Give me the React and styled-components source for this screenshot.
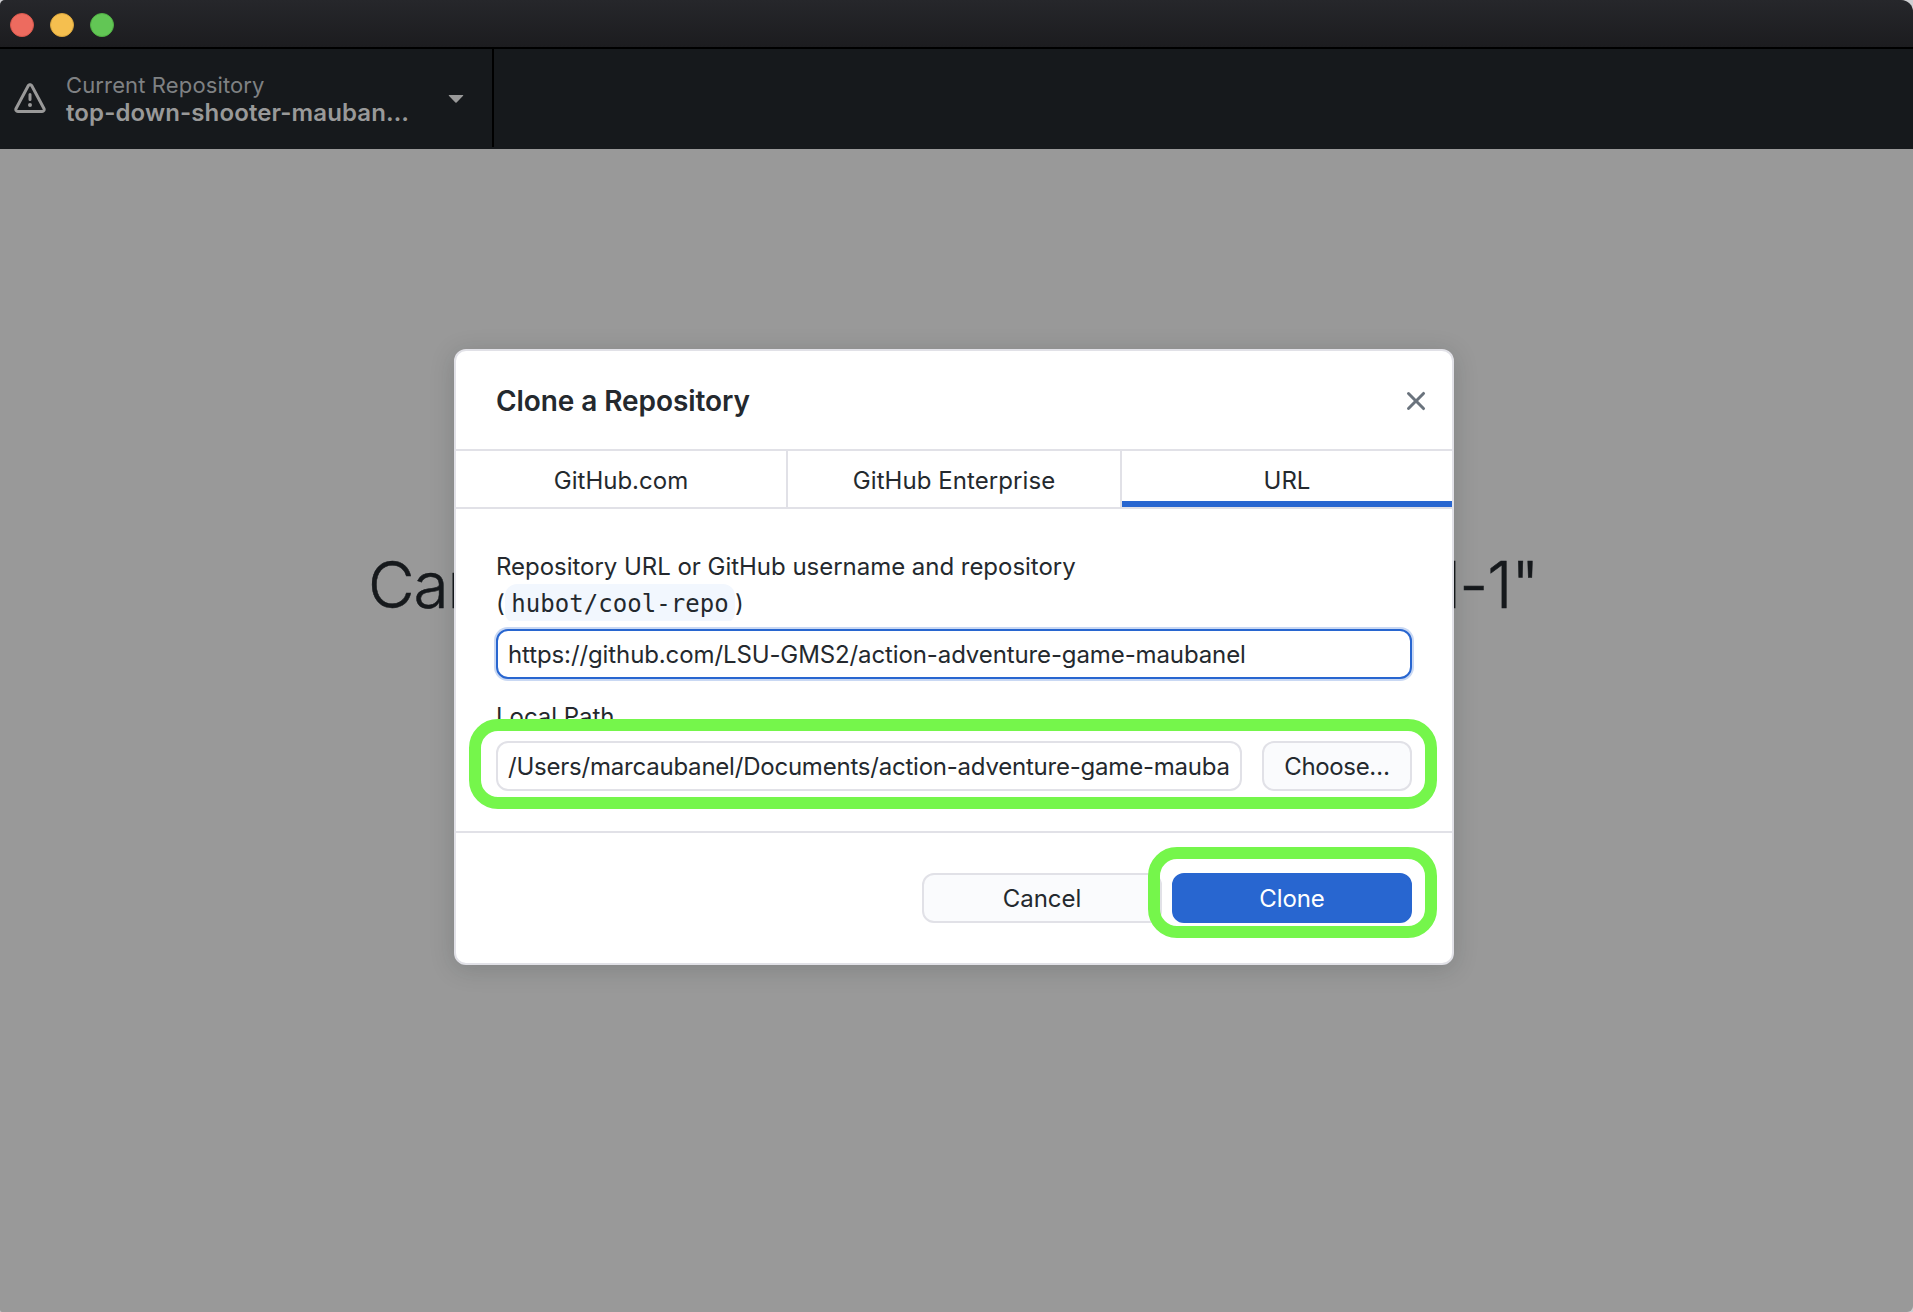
import React from "react";
import styled, { createGlobalStyle, css } from "styled-components";

const GlobalStyle = createGlobalStyle`
  * { box-sizing: border-box; }
  html, body { margin: 0; padding: 0; }
  body {
    background: #cfcfd2;
    color: #24292e;
    font-family: Inter, "Liberation Sans", sans-serif;
    font-size: 24px;
    overflow: hidden;
  }
`;

const Window = styled.div`
  display: flex;
  flex-direction: column;
  width: 1913px;
  height: 1312px;
  overflow: hidden;
  background: #999999;
  border-radius: 5px 12px 6px 2px;
`;

const TitleBar = styled.header`
  display: flex;
  align-items: center;
  gap: 16px;
  height: 49px;
  padding: 3px 10px 0;
  border-bottom: 2px solid #000;
  background: linear-gradient(#26272b, #1c1c1f);
`;

const TrafficLight = styled.span`
  width: 24px;
  height: 24px;
  border-radius: 50%;
  border: 1px solid ${(p) => p.$edge};
  background: ${(p) => p.$fill};
`;

const Toolbar = styled.nav`
  display: flex;
  height: 100px;
  padding-bottom: 2px;
  background: #16191c;
`;

const RepositoryButton = styled.div`
  display: flex;
  align-items: center;
  width: 494px;
  padding: 2px 20px 0 14px;
  border-right: 2px solid #000;
`;

const RepositoryText = styled.div`
  display: flex;
  flex-direction: column;
  flex: 1;
  margin-left: 20px;
  line-height: 27px;
  white-space: nowrap;
`;

const RepositoryCaption = styled.span`
  font-size: 22px;
  letter-spacing: 0.13px;
  color: #7f8183;
`;

const RepositoryName = styled.span`
  font-size: 24px;
  font-weight: 600;
  letter-spacing: 0.12px;
  color: #999999;
`;

const Icon = styled.svg`
  display: block;
  flex: none;
  width: 32px;
  height: 32px;
  margin-top: ${(p) => p.$shift || 0}px;
  fill: ${(p) => p.$color};
`;

const Workspace = styled.main`
  position: relative;
  flex: 1;
  padding-top: 395px;
`;

const MissingTitle = styled.h1`
  margin: 0;
  padding-left: 368px;
  font-size: 64px;
  font-weight: 300;
  line-height: 82px;
  letter-spacing: -1.1px;
  white-space: nowrap;
  color: #16191c;
  -webkit-text-stroke: 0.5px #16191c;
`;

const Condensed = styled.span`
  letter-spacing: -3.01px;
`;

const Dialog = styled.section`
  position: absolute;
  top: 200px;
  left: 454px;
  display: flex;
  flex-direction: column;
  width: 1000px;
  height: 616px;
  border: 2px solid #e1e1e7;
  border-radius: 12px;
  background: #fff;
  box-shadow: 0 4px 24px rgba(20, 36, 36, 0.18);
`;

const DialogHeader = styled.header`
  display: flex;
  align-items: center;
  justify-content: space-between;
  height: 100px;
  padding: 0 20px 0 40px;
  border-bottom: 2px solid #e1e1e7;
`;

const DialogTitle = styled.h2`
  margin: 1px 0 0;
  font-size: 28px;
  font-weight: 600;
  letter-spacing: -0.08px;
`;

const TabBar = styled.div`
  display: grid;
  grid-template-columns: 332px 334px 330px;
  height: 58px;
  border-bottom: 2px solid #e1e1e7;
`;

const Tab = styled.div`
  display: flex;
  align-items: center;
  justify-content: center;
  padding-top: 2px;
  letter-spacing: ${(p) => p.$tracking || 0}px;
  border-right: 2px solid #e1e1e7;
  ${(p) =>
    p.$selected &&
    css`
      border-right: 0;
      box-shadow: inset 0 -6px 0 #2866d0;
    `}
`;

const DialogBody = styled.div`
  height: 324px;
  padding: 39px 40px 0;
  border-bottom: 2px solid #e1e1e7;
`;

const FieldLabel = styled.div`
  overflow: hidden;
  height: ${(p) => p.$height}px;
  margin-bottom: ${(p) => p.$gap}px;
  line-height: ${(p) => p.$leading}px;
  letter-spacing: -0.03px;
`;

const Code = styled.code`
  padding: 6px 6px 6px 6.5px;
  border-radius: 12px;
  background: #f2f7fe;
  font-family: "DejaVu Sans Mono", monospace;
  font-size: 24px;
  letter-spacing: 0.06px;
`;

const TextField = styled.div`
  flex: 1;
  min-width: 0;
  height: 50px;
  padding: 1px 10px 0;
  border: 2px solid ${(p) => (p.$focused ? "#2866d0" : "#e1e1e7")};
  border-radius: 12px;
  background: #fff;
  box-shadow: ${(p) => (p.$focused ? "0 0 0 2px #c9d8f3" : "none")};
`;

const FieldValue = styled.div`
  overflow: hidden;
  line-height: 46px;
  height: 45px;
  letter-spacing: ${(p) => p.$tracking}px;
  white-space: nowrap;
`;

const FieldGap = styled.div`
  height: 20px;
`;

const PathRow = styled.div`
  position: relative;
  display: flex;
  gap: 20px;
`;

const Button = styled.div`
  display: flex;
  align-items: center;
  justify-content: center;
  width: ${(p) => p.$width}px;
  height: 50px;
  border: 2px solid ${(p) => (p.$primary ? "#2866d0" : "#e1e1e7")};
  border-radius: 12px;
  background: ${(p) => (p.$primary ? "#2866d0" : "#fafbfd")};
  color: ${(p) => (p.$primary ? "#fff" : "#24292e")};
  letter-spacing: ${(p) => p.$tracking || 0}px;
`;

const DialogFooter = styled.footer`
  display: flex;
  justify-content: flex-end;
  gap: 10px;
  padding: 40px 40px 0;
`;

const PrimarySlot = styled.div`
  position: relative;
`;

const Callout = styled.div`
  position: absolute;
  top: ${(p) => p.$top}px;
  right: -25px;
  bottom: ${(p) => p.$bottom}px;
  left: ${(p) => p.$left}px;
  border: 12px solid #75f64b;
  border-radius: 29px;
`;

const AlertIcon = () => (
  <Icon viewBox="0 0 16 16" $color="#999999">
    <path d="M8.22 1.754a.25.25 0 00-.44 0L1.698 13.132a.25.25 0 00.22.368h12.164a.25.25 0 00.22-.368L8.22 1.754zm-1.763-.707c.659-1.234 2.427-1.234 3.086 0l6.082 11.378A1.75 1.75 0 0114.082 15H1.918a1.75 1.75 0 01-1.543-2.575L6.457 1.047zM9 11a1 1 0 11-2 0 1 1 0 012 0zm-.25-5.25a.75.75 0 00-1.5 0v2.5a.75.75 0 001.5 0v-2.5z" />
  </Icon>
);

const CaretIcon = () => (
  <Icon viewBox="0 0 16 16" $color="#999999" $shift={-4}>
    <path d="M4.427 7.427l3.396 3.396a.25.25 0 00.354 0l3.396-3.396A.25.25 0 0011.396 7H4.604a.25.25 0 00-.177.427z" />
  </Icon>
);

const CloseIcon = () => (
  <Icon viewBox="0 0 16 16" $color="#6a737d" $shift={2}>
    <path d="M3.72 3.72a.75.75 0 011.06 0L8 6.94l3.22-3.22a.75.75 0 111.06 1.06L9.06 8l3.22 3.22a.75.75 0 11-1.06 1.06L8 9.06l-3.22 3.22a.75.75 0 01-1.06-1.06L6.94 8 3.72 4.78a.75.75 0 010-1.06z" />
  </Icon>
);

export default function App() {
  return (
    <>
      <GlobalStyle />
      <Window>
        <TitleBar>
          <TrafficLight $fill="#ed6b5f" $edge="#d9574c" />
          <TrafficLight $fill="#f5bf4f" $edge="#dba63c" />
          <TrafficLight $fill="#62c655" $edge="#50b043" />
        </TitleBar>
        <Toolbar>
          <RepositoryButton>
            <AlertIcon />
            <RepositoryText>
              <RepositoryCaption>Current Repository</RepositoryCaption>
              <RepositoryName>top-down-shooter-mauban…</RepositoryName>
            </RepositoryText>
            <CaretIcon />
          </RepositoryButton>
        </Toolbar>
        <Workspace>
          <MissingTitle>
            Ca<Condensed>n't find "top-down-shooter-maubane</Condensed>l-1"
          </MissingTitle>
          <Dialog>
            <DialogHeader>
              <DialogTitle>Clone a Repository</DialogTitle>
              <CloseIcon />
            </DialogHeader>
            <TabBar>
              <Tab>GitHub.com</Tab>
              <Tab $tracking={0.07}>GitHub Enterprise</Tab>
              <Tab $selected>URL</Tab>
            </TabBar>
            <DialogBody>
              <FieldLabel $height={73} $leading={37} $gap={8}>
                Repository URL or GitHub username and repository
                <br />(<Code>hubot/cool-repo</Code>)
              </FieldLabel>
              <TextField $focused>
                <FieldValue $tracking={-0.11}>
                  https://github.com/LSU-GMS2/action-adventure-game-maubanel
                </FieldValue>
              </TextField>
              <FieldGap />
              <FieldLabel $height={36} $leading={36} $gap={6}>
                Local Path
              </FieldLabel>
              <PathRow>
                <TextField>
                  <FieldValue $tracking={-0.22}>
                    /Users/marcaubanel/Documents/action-adventure-game-mauba
                  </FieldValue>
                </TextField>
                <Button $width={150} $tracking={-0.35}>
                  Choose…
                </Button>
                <Callout $top={-22} $bottom={-18} $left={-27} />
              </PathRow>
            </DialogBody>
            <DialogFooter>
              <Button $width={240} $tracking={-0.05}>
                Cancel
              </Button>
              <PrimarySlot>
                <Button $width={240} $tracking={-0.1} $primary>
                  Clone
                </Button>
                <Callout $top={-26} $bottom={-15} $left={-24} />
              </PrimarySlot>
            </DialogFooter>
          </Dialog>
        </Workspace>
      </Window>
    </>
  );
}
